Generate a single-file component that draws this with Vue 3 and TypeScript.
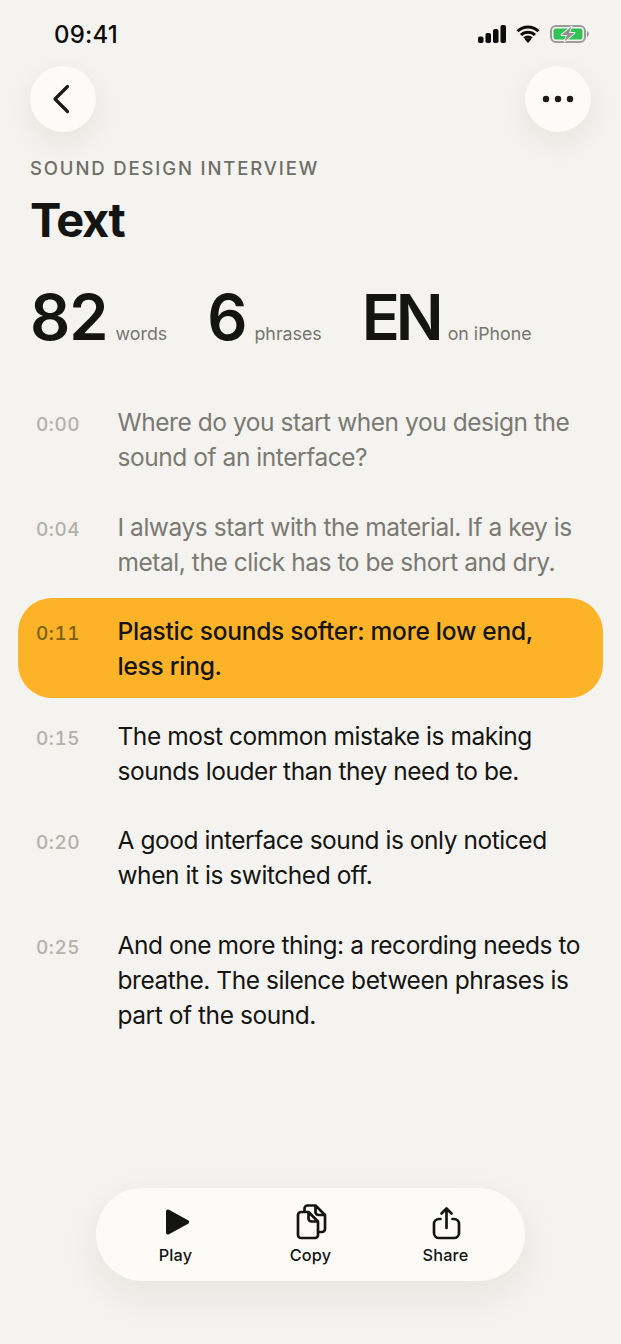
<script setup lang="ts">
interface Row { time: string; text: string; state: 'past' | 'active' | 'next' }
const rows: Row[] = [
  { time: '0:00', text: 'Where do you start when you design the sound of an interface?', state: 'past' },
  { time: '0:04', text: 'I always start with the material. If a key is metal, the click has to be short and dry.', state: 'past' },
  { time: '0:11', text: 'Plastic sounds softer: more low end, less ring.', state: 'active' },
  { time: '0:15', text: 'The most common mistake is making sounds louder than they need to be.', state: 'next' },
  { time: '0:20', text: 'A good interface sound is only noticed when it is switched off.', state: 'next' },
  { time: '0:25', text: 'And one more thing: a recording needs to breathe. The silence between phrases is part of the sound.', state: 'next' },
]
const stats = [
  { value: '82', label: 'words' },
  { value: '6', label: 'phrases' },
  { value: 'EN', label: 'on iPhone' },
]
</script>

<template>
  <div class="screen">
    <div class="status">
      <span class="clock">09:41</span>
      <div class="status-icons">
        <svg width="28" height="18" viewBox="0 0 28 18">
          <rect x="0" y="11.500" width="5.500" height="6.500" rx="1.800" fill="#0b0b0b" />
          <rect x="7.500" y="8" width="5.500" height="10" rx="1.800" fill="#0b0b0b" />
          <rect x="15" y="4" width="5.500" height="14" rx="1.800" fill="#0b0b0b" />
          <rect x="22.500" y="0" width="5.500" height="18" rx="1.800" fill="#0b0b0b" />
        </svg>
        <svg width="24" height="18" viewBox="0 0 24 18">
          <path d="M1.500 6.200a15 15 0 0 1 21 0M5 10a10 10 0 0 1 14 0M8.400 13.400a5.200 5.200 0 0 1 7.200 0" fill="none" stroke="#0b0b0b" stroke-width="3" />
          <path d="M12 18l-3.200-3.400a4.600 4.600 0 0 1 6.400 0z" fill="#0b0b0b" />
        </svg>
        <svg width="39" height="18" viewBox="0 0 39 18">
          <rect x="1" y="1" width="34" height="16" rx="5" fill="none" stroke="#9b9b98" stroke-width="2" />
          <rect x="3.500" y="3.500" width="29" height="11" rx="2.800" fill="#2fc255" />
          <path d="M37 6.300c1.200.4 1.800 1.300 1.800 2.700s-.6 2.300-1.800 2.700z" fill="#8f8f8c" />
          <path d="M21.500 1.500L11.500 10h5.500L14.500 16.500l10-8.500h-5.500z" fill="#8f8f8c" stroke="#f4f3ef" stroke-width="1.800" stroke-linejoin="round" paint-order="stroke" />
        </svg>
      </div>
    </div>

    <div class="nav">
      <button class="round" aria-label="Back">
        <svg width="24" height="32" viewBox="0 0 24 32">
          <path d="M16.500 3.500L4 16l12.500 12.500" fill="none" stroke="#1a1a18" stroke-width="3.200" stroke-linecap="round" stroke-linejoin="round" />
        </svg>
      </button>
      <button class="round" aria-label="More">
        <svg width="32" height="8" viewBox="0 0 32 8">
          <circle cx="4" cy="4" r="3.200" fill="#1a1a18" />
          <circle cx="16" cy="4" r="3.200" fill="#1a1a18" />
          <circle cx="28" cy="4" r="3.200" fill="#1a1a18" />
        </svg>
      </button>
    </div>

    <header class="head">
      <p class="eyebrow">SOUND DESIGN INTERVIEW</p>
      <h1 class="title">Text</h1>
      <div class="stats">
        <div v-for="s in stats" :key="s.label" class="stat">
          <span class="stat-value">{{ s.value }}</span>
          <span class="stat-label">{{ s.label }}</span>
        </div>
      </div>
    </header>

    <div class="rows">
      <div v-for="r in rows" :key="r.time" class="row" :class="r.state">
        <span class="time">{{ r.time }}</span>
        <p class="line">{{ r.text }}</p>
      </div>
    </div>

    <div class="dock-wrap">
      <div class="dock">
        <div class="action">
          <svg width="32" height="36" viewBox="0 0 32 36">
            <path d="M6 7.500c0-1.600 1.500-2.400 2.900-1.700l19.200 10.500c1.400.8 1.400 2.600 0 3.400L8.900 30.200C7.500 31 6 30.100 6 28.500z" fill="#141412" />
          </svg>
          <span>Play</span>
        </div>
        <div class="action">
          <svg width="32" height="36" viewBox="0 0 32 36">
            <path d="M9.500 8V4.500a3 3 0 0 1 3-3h8L30 11v14a3 3 0 0 1-3 3h-3.500M20.500 1.500V8a3 3 0 0 0 3 3H30" fill="none" stroke="#141412" stroke-width="2.700" stroke-linejoin="round" />
            <path d="M6 8h7.500L23 17.500V31a3 3 0 0 1-3 3H6a3 3 0 0 1-3-3V11a3 3 0 0 1 3-3zM13.500 8v6.500a3 3 0 0 0 3 3H23" fill="none" stroke="#141412" stroke-width="2.700" stroke-linejoin="round" />
          </svg>
          <span>Copy</span>
        </div>
        <div class="action">
          <svg width="32" height="36" viewBox="0 0 32 36">
            <path d="M10.500 15H9a5 5 0 0 0-5 5v9a5 5 0 0 0 5 5h15a5 5 0 0 0 5-5v-9a5 5 0 0 0-5-5h-1.500" fill="none" stroke="#141412" stroke-width="2.700" stroke-linecap="round" />
            <path d="M16.500 24V4.500M11.500 9.500l5-5 5 5" fill="none" stroke="#141412" stroke-width="2.700" stroke-linecap="round" stroke-linejoin="round" />
          </svg>
          <span>Share</span>
        </div>
      </div>
    </div>
  </div>
</template>

<style>
html, body { margin: 0; background: #f4f3ef; }
</style>

<style scoped>
.screen {
  width: 621px;
  height: 1344px;
  background: #f4f3ef;
  font-family: Inter, "Liberation Sans", sans-serif;
  color: #141412;
  display: flex;
  flex-direction: column;
  overflow: hidden;
}
.status {
  display: flex;
  justify-content: space-between;
  align-items: center;
  height: 26px;
  padding: 21px 32px 0 54px;
}
.clock { font-size: 24px; font-weight: 500; color: #0b0b0b; letter-spacing: 0.2px; }
.status-icons { display: flex; align-items: center; gap: 10px; }
.nav {
  display: flex;
  justify-content: space-between;
  padding: 19px 30px 0;
}
.round {
  width: 66px;
  height: 66px;
  border-radius: 50%;
  border: 0;
  padding: 0;
  background: #fcfbf8;
  box-shadow: 0 10px 30px rgba(30, 28, 20, 0.07);
  display: flex;
  align-items: center;
  justify-content: center;
}
.head { padding: 25px 30px 0; }
.eyebrow {
  margin: 0;
  font-size: 18.500px;
  line-height: 22px;
  font-weight: 500;
  letter-spacing: 1.860px;
  color: #6f6d67;
}
.title {
  margin: 13px 0 0;
  font-size: 47px;
  line-height: 56px;
  font-weight: 700;
  letter-spacing: -1.400px;
  color: #141412;
}
.stats { display: flex; align-items: baseline; gap: 40px; margin-top: 33px; }
.stat { display: flex; align-items: baseline; gap: 8px; }
.stat-value {
  font-size: 63px;
  line-height: 72px;
  font-weight: 600;
  letter-spacing: -1px;
  color: #141412;
}
.stat:last-child .stat-value { letter-spacing: -4px; }
.stat-label { font-size: 17.800px; color: #77756f; }
.rows { display: flex; flex-direction: column; gap: 4.500px; margin-top: 36px; padding: 0 18px; }
.row {
  display: grid;
  grid-template-columns: 81.500px 1fr;
  padding: 16px 18px 14px 18px;
  border-radius: 34px;
}
.time {
  font-size: 19px;
  line-height: 39px;
  font-weight: 500;
  color: #b3b1ab;
  letter-spacing: 0.500px;
  font-variant-numeric: tabular-nums;
}
.line { margin: 0; font-size: 24.500px; line-height: 35px; letter-spacing: -0.450px; }
.past .line { color: #7b7973; }
.next .line { color: #141412; }
.active { background: #fdb327; }
.active .line { color: #141412; font-weight: 500; letter-spacing: -0.250px; padding-right: 30px; }
.active .time { color: #7d6014; }
.dock-wrap { margin-top: auto; display: flex; justify-content: center; padding-bottom: 63px; }
.dock {
  width: 429px;
  height: 93px;
  border-radius: 46.500px;
  background: #fcfbf8;
  box-shadow: 0 14px 40px rgba(30, 28, 20, 0.07);
  display: grid;
  grid-template-columns: repeat(3, 135px);
  justify-content: center;
  box-sizing: border-box;
  padding-top: 16px;
}
.action {
  display: flex;
  flex-direction: column;
  align-items: center;
  gap: 5px;
  font-size: 16.300px;
  line-height: 20px;
  font-weight: 550;
  letter-spacing: 0.200px;
  color: #141412;
}
</style>
